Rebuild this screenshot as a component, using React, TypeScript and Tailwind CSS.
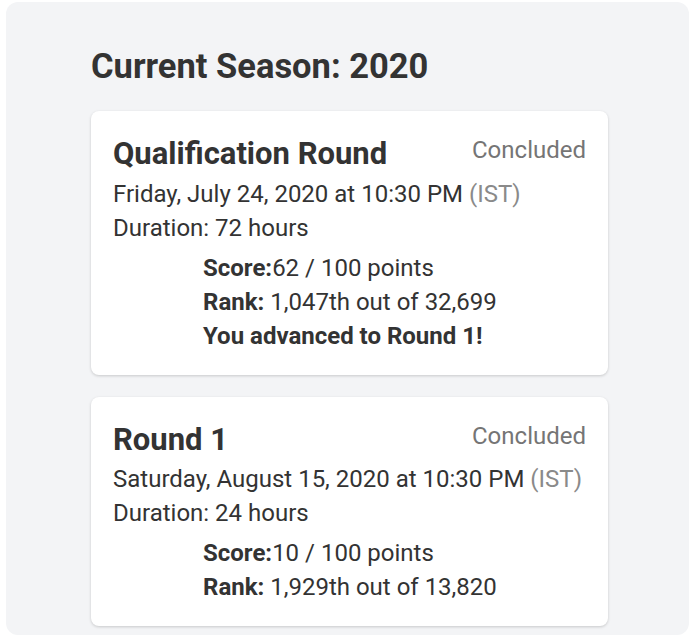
type Round = {
  name: string;
  status: string;
  date: string;
  duration: string;
  score: string;
  rank: string;
  note?: string;
};

const rounds: Round[] = [
  {
    name: "Qualification Round",
    status: "Concluded",
    date: "Friday, July 24, 2020 at 10:30 PM",
    duration: "72 hours",
    score: "62 / 100 points",
    rank: "1,047th out of 32,699",
    note: "You advanced to Round 1!",
  },
  {
    name: "Round 1",
    status: "Concluded",
    date: "Saturday, August 15, 2020 at 10:30 PM",
    duration: "24 hours",
    score: "10 / 100 points",
    rank: "1,929th out of 13,820",
  },
];

function RoundCard({ round }: { round: Round }) {
  return (
    <div className="w-[517px] rounded-lg bg-white px-[22px] pt-[24px] pb-[22px] shadow-[0_1px_3px_rgba(0,0,0,0.18)]">
      <div className="flex items-start justify-between">
        <h3 className="text-[31px] font-bold leading-[1.2] text-[#333]">{round.name}</h3>
        <span className="mt-[1px] text-[24px] leading-[1.2] text-[#757575]">{round.status}</span>
      </div>
      <div className="mt-[4px] text-[24px] leading-[34px] text-[#333]">
        <p>
          {round.date} <span className="text-[#8a8a8a]">(IST)</span>
        </p>
        <p>Duration: {round.duration}</p>
      </div>
      <div className="mt-[6px] ml-[90px] text-[24px] leading-[34px] text-[#333]">
        <p>
          <span className="font-bold">Score:</span>
          {round.score}
        </p>
        <p>
          <span className="font-bold">Rank:</span> {round.rank}
        </p>
        {round.note && <p className="font-bold">{round.note}</p>}
      </div>
    </div>
  );
}

export default function App() {
  return (
    <div className="min-h-screen bg-white pt-[2px] pl-[6px] pr-[3px] font-['Roboto',sans-serif]">
      <div className="min-h-[633px] rounded-xl bg-[#f3f4f6] pt-[44px] pl-[85px]">
        <h2 className="text-[34.5px] font-bold leading-[1.2] text-[#333]">Current Season: 2020</h2>
        <div className="mt-[24px] flex flex-col gap-[22px]">
          {rounds.map((r) => (
            <RoundCard key={r.name} round={r} />
          ))}
        </div>
      </div>
    </div>
  );
}
